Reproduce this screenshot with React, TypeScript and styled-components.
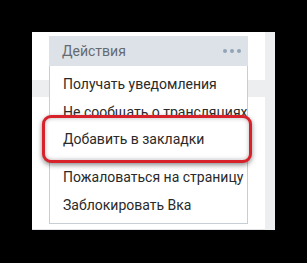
import React from 'react';
import styled, { createGlobalStyle } from 'styled-components';

const GlobalStyle = createGlobalStyle`
  html, body {
    margin: 0;
    padding: 0;
    background: #000;
  }
  body {
    font-family: Roboto, "Open Sans", "Liberation Sans", sans-serif;
  }
`;

// Black frame around the page fragment
const Frame = styled.div`
  width: 307px;
  height: 263px;
  padding: 32px 32px 33px 32px;
  box-sizing: border-box;
`;

// Light grey page area with white cards behind the menu
const Page = styled.div`
  position: relative;
  height: 198px;
  background: #edeef0;
  display: grid;
  grid-template-rows: 48px 1fr;
  row-gap: 17px;
  padding-right: 10px;
`;

const Card = styled.div`
  background: #fff;
  border-bottom: ${({ $last }: { $last?: boolean }) => ($last ? '1px solid #e0e2e6' : 'none')};
`;

// Dropdown menu floats over the cards
const Menu = styled.div`
  position: absolute;
  left: 17px;
  top: 4px;
  width: 199px;
  box-sizing: border-box;
  background: #fff;
  border: 1px solid #c8ced6;
  border-top: none;
  display: flex;
  flex-direction: column;
  padding-bottom: 4px;
`;

const Header = styled.div`
  height: 30px;
  background: #dde2e8;
  display: flex;
  align-items: center;
  justify-content: space-between;
  padding: 0 7px 0 13px;
  margin: 0 -1px 4px;
  font-size: 14px;
  color: #656a70;
`;

const Dots = styled.div`
  display: flex;
  gap: 3px;
  span {
    width: 4px;
    height: 4px;
    border-radius: 50%;
    background: #93a3b5;
  }
`;

const Item = styled.div`
  height: 28px;
  display: flex;
  align-items: center;
  padding-left: 13px;
  font-size: 14px;
  color: #2a2a2a;
  white-space: nowrap;
  overflow: hidden;
`;

// Red highlight frame over the chosen item
const Highlight = styled.div`
  position: relative;
  height: 48px;
  margin: -11px -5px 0 -8px;
  box-sizing: border-box;
  border: 3px solid #d8222b;
  border-radius: 9px;
  background: #fff;
  box-shadow: 0 2px 5px rgba(0, 0, 0, 0.45), inset 0 0 4px rgba(0, 0, 0, 0.3);
  display: flex;
  align-items: center;
  padding-left: 18px;
  font-size: 14px;
  color: #2a2a2a;
  &::after {
    content: '';
    position: absolute;
    left: 16px;
    right: 10px;
    bottom: 1px;
    border-bottom: 1px solid #e6e8eb;
  }
`;

export default function App() {
  return (
    <>
      <GlobalStyle />
      <Frame>
        <Page>
          <Card />
          <Card $last />
          <Menu>
            <Header>
              Действия
              <Dots>
                <span />
                <span />
                <span />
              </Dots>
            </Header>
            <Item>Получать уведомления</Item>
            <Item>Не сообщать о трансляциях</Item>
            <Highlight>Добавить в закладки</Highlight>
            <Item>Пожаловаться на страницу</Item>
            <Item>Заблокировать Вка</Item>
          </Menu>
        </Page>
      </Frame>
    </>
  );
}
